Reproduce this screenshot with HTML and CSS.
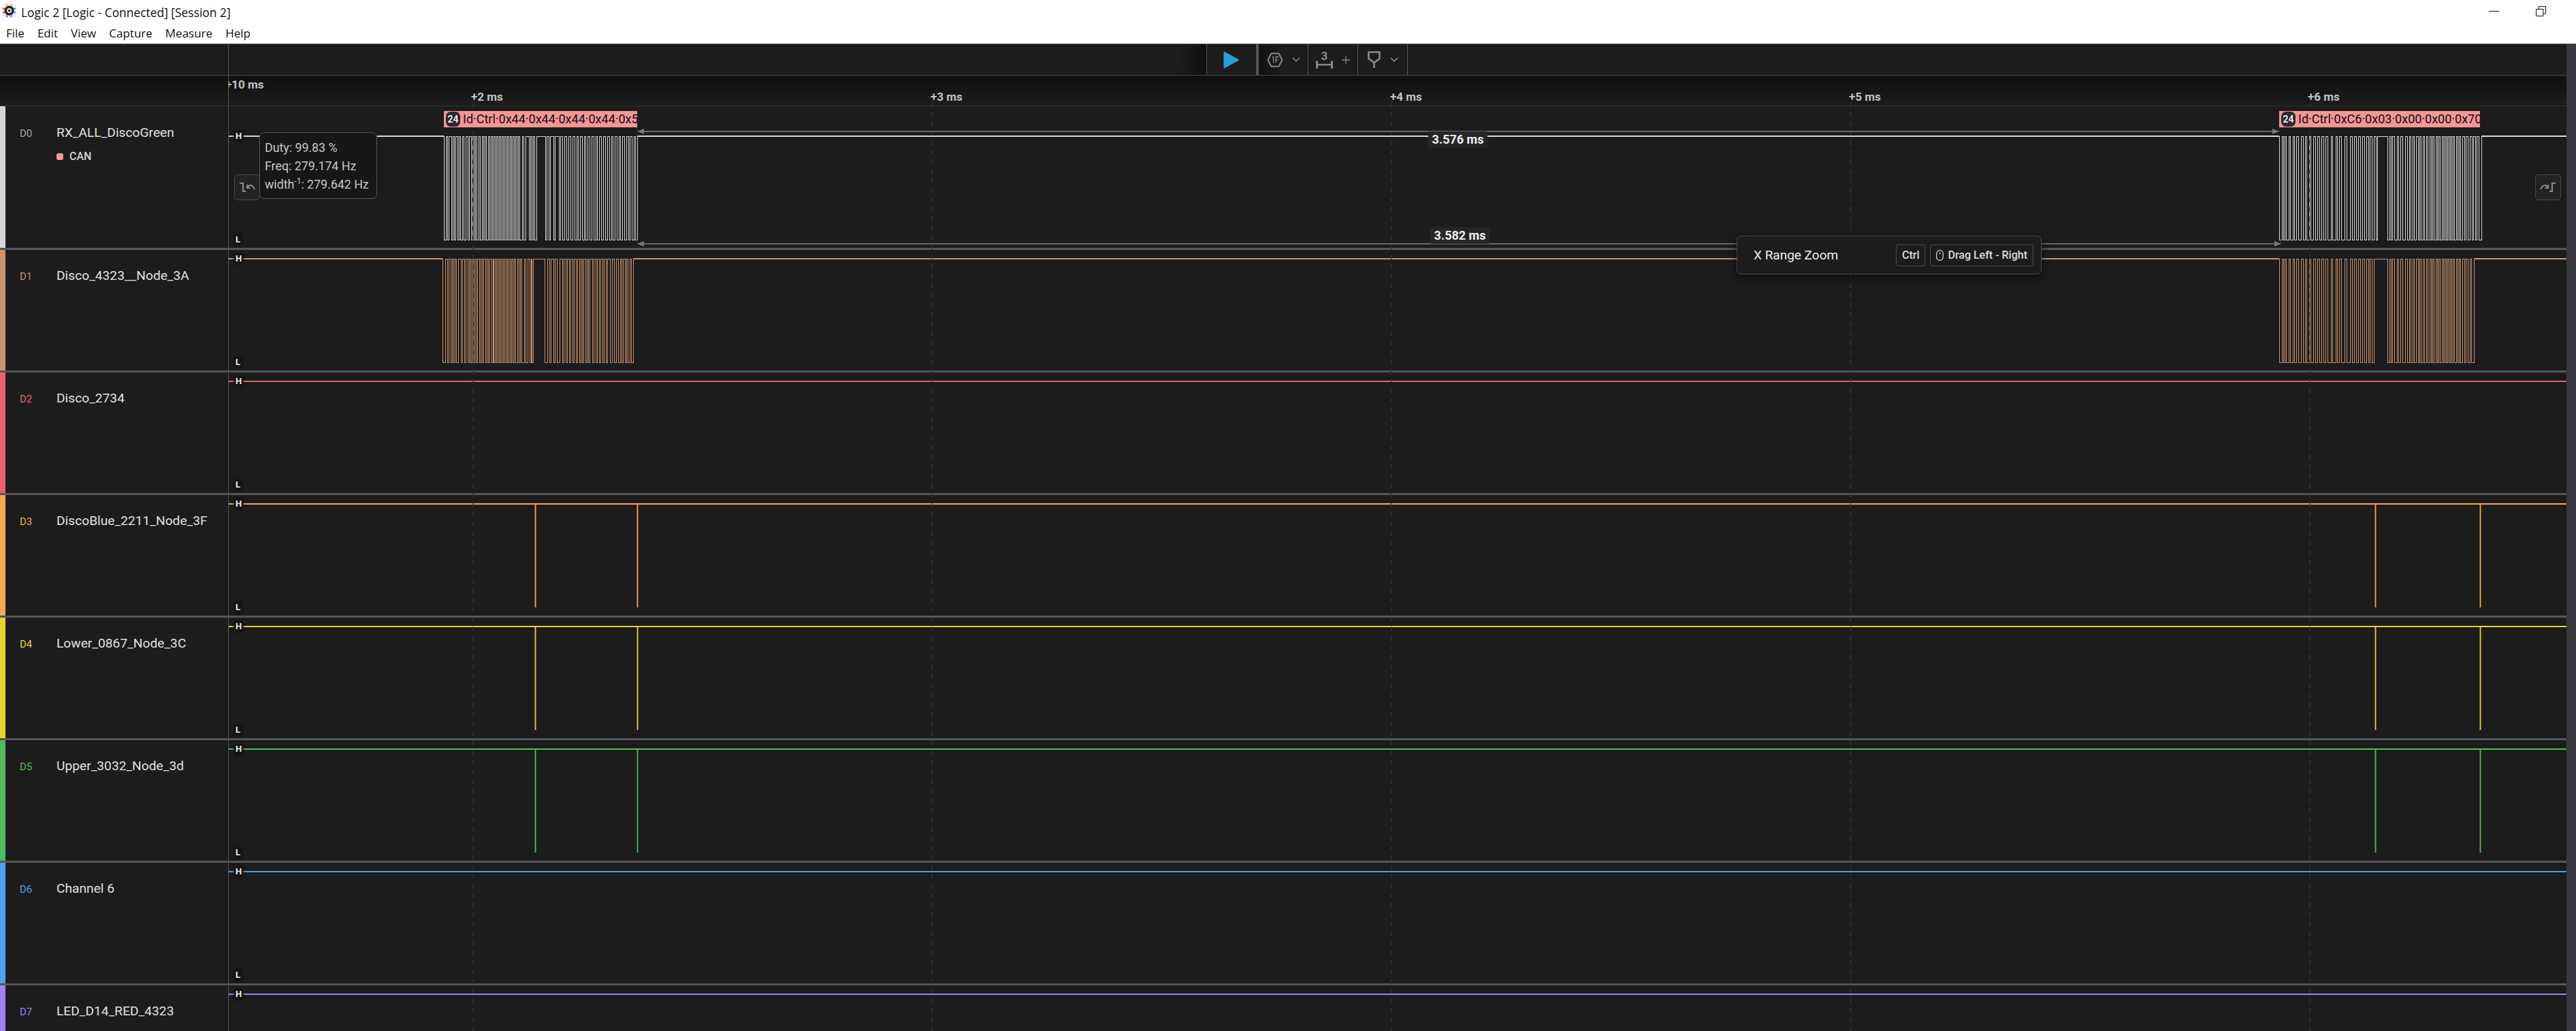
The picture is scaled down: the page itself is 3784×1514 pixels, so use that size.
FILE: index.html
```html
<!DOCTYPE html>
<html>
<head>
  <title>Logic 2 [Logic - Connected] [Session 2]</title>
  <link rel="stylesheet" href="styles.css">
</head>
<body>

<!-- Window title + menu -->
<div class="titlebar">
  <svg class="logo" viewBox="0 0 26 26">
    <rect x="0" y="0" width="24" height="24" rx="6" fill="#f1f1f3"/>
    <rect x="7" y="1" width="2.5" height="5" fill="#f2b632"/>
    <rect x="14" y="1" width="2.5" height="5" fill="#f2b632"/>
    <rect x="1" y="7.5" width="5" height="2.5" fill="#ee4a52"/>
    <rect x="1" y="13.5" width="5" height="2.5" fill="#ee4a52"/>
    <rect x="18" y="7.5" width="5" height="2.5" fill="#2cb4ea"/>
    <rect x="18" y="13.5" width="5" height="2.5" fill="#2cb4ea"/>
    <rect x="7" y="18" width="2.5" height="5" fill="#a45be8"/>
    <rect x="14" y="18" width="2.5" height="5" fill="#a45be8"/>
    <circle cx="12" cy="12" r="8" fill="#26262a"/>
    <circle cx="12" cy="12" r="4" fill="#f5f5f5"/>
    <circle cx="12" cy="12" r="2" fill="#26262a"/>
  </svg>
  <div class="title">Logic 2 [Logic - Connected] [Session 2]</div>
  <svg class="win-min" viewBox="0 0 15 1"><rect width="15" height="1" fill="#111"/></svg>
  <svg class="win-restore" viewBox="0 0 15 15"><path d="M0.5 4.5h10.5v10h-10.500z M4 4.500v-4h10.500v10.500h-3.500" fill="none" stroke="#111"/></svg>
  <div class="menu">
    <span>File</span><span>Edit</span><span>View</span><span>Capture</span><span>Measure</span><span>Help</span>
  </div>
</div>

<div class="app">
  <div class="main">

    <!-- Toolbar -->
    <div class="toolbar">
      <div class="tb-side"></div>
      <div class="tb-fill"></div>
      <div class="tb-btn tb-play">
        <svg width="24" height="26" viewBox="0 0 24 26"><path d="M1 1L23 13L1 25Z" fill="#22a1de" stroke="#22a1de" stroke-linejoin="round"/></svg>
      </div>
      <div class="tb-btn tb-hex">
        <svg width="24" height="22" viewBox="0 0 24 22"><path d="M6.500 1.500h11l5 9.500l-5 9.500h-11l-5-9.500z" fill="none" stroke="#8a8a8a" stroke-width="2"/><path d="M7.500 7.500l2-1v9 M13 15.500v-9h4.500 M13 11h3.500" fill="none" stroke="#8a8a8a" stroke-width="1.300"/></svg>
        <svg width="12" height="8" viewBox="0 0 12 8"><path d="M1 1l5 5l5-5" fill="none" stroke="#8a8a8a" stroke-width="1.500"/></svg>
      </div>
      <div class="tb-btn">
        <span class="tb-measure">
          <span class="tb-three">3</span>
          <svg width="25" height="13" viewBox="0 0 25 13"><path d="M1.500 1.500v11 M23.500 1.500v11" stroke="#8a8a8a" stroke-width="3"/><path d="M1 7h23" stroke="#8a8a8a" stroke-width="2.500"/></svg>
        </span>
        <svg width="12" height="12" viewBox="0 0 12 12"><path d="M6 0v12 M0 6h12" stroke="#8a8a8a" stroke-width="1.300"/></svg>
      </div>
      <div class="tb-btn tb-pin">
        <svg width="19" height="25" viewBox="0 0 19 25"><path d="M1.500 1.500h16v9.500l-8 6l-8-6z M9.500 17v8" fill="none" stroke="#8a8a8a" stroke-width="2.600"/></svg>
        <svg width="12" height="8" viewBox="0 0 12 8"><path d="M1 1l5 5l5-5" fill="none" stroke="#8a8a8a" stroke-width="1.500"/></svg>
      </div>
    </div>

    <!-- Time ruler -->
    <div class="ruler">
      <div class="ruler-side"></div>
      <div class="ruler-scale">
        <span class="tick tick-start">+10 ms</span>
        <span class="tick" style="left:356px">+2 ms</span>
        <span class="tick" style="left:1031px">+3 ms</span>
        <span class="tick" style="left:1706px">+4 ms</span>
        <span class="tick" style="left:2380px">+5 ms</span>
        <span class="tick" style="left:3054px">+6 ms</span>
      </div>
    </div>

    <!-- Channels -->
    <div class="row row-first c0">
      <div class="chan">
        <span class="chan-id">D0</span>
        <div>
          <div class="chan-name">RX_ALL_DiscoGreen</div>
          <div class="analyzer"><i></i>CAN</div>
        </div>
      </div>
      <div class="track">
        <div class="ann-band"></div>
        <div class="wave-box">
          <span class="lvl lvl-h">H</span><span class="lvl lvl-l">L</span>
          <svg class="wave wave-burst" viewBox="336 0 3434 177"><path class="idle" d="M336 13H652M936 13H3348M3645 13H3770"/><path d="M652 13V165H655V13H657V165H659V13H663V165H665V13H667V165H669V13H672V165H674V13H676V165H679V13H681V165H684V13H687V165H689V13H692V165H694V13H696V165H698V13H700V165H703V13H705V165H708V13H710V165H712V13H714V165H717V13H719V165H721V13H723V165H725V13H727V165H729V13H731V165H733V13H735V165H737V13H739V165H741V13H743V165H745V13H747V165H749V13H751V165H753V13H755V165H757V13H759V165H761V13H763V165H767V13H769V165H772V13H777V165H779V13H781V165H783V13H785V165H788V13H801V165H803V13H806V165H808V13H813V165H815V13H821V165H823V13H826V165H829V13H832V165H835V13H838V165H841V13H844V165H847V13H849V165H852V13H855V165H858V13H860V165H863V13H866V165H869V13H872V165H875V13H877V165H880V13H883V165H886V13H889V165H892V13H895V165H898V13H900V165H903V13H906V165H909V13H911V165H914V13H917V165H920V13H923V165H925V13H928V165H931V13H933V165H936V13M3348 13V165H3352V13H3354V165H3356V13H3358V165H3362V13H3364V165H3368V13H3370V165H3373V13H3376V165H3380V13H3383V165H3386V13H3388V165H3392V13H3394V165H3398V13H3401V165H3404V13H3407V165H3410V13H3413V165H3416V13H3419V165H3424V13H3426V165H3431V13H3433V165H3436V13H3439V165H3444V13H3447V165H3452V13H3455V165H3458V13H3461V165H3464V13H3467V165H3470V13H3473V165H3476V13H3479V165H3481V13H3484V165H3487V13H3490V165H3492V13H3507V165H3510V13H3512V165H3514V13H3517V165H3521V13H3523V165H3526V13H3529V165H3533V13H3536V165H3539V13H3541V165H3544V13H3546V165H3549V13H3552V165H3554V13H3556V165H3559V13H3561V165H3564V13H3566V165H3569V13H3571V165H3573V13H3575V165H3578V13H3580V165H3582V13H3584V165H3587V13H3589V165H3591V13H3593V165H3595V13H3597V165H3599V13H3601V165H3603V13H3605V165H3608V13H3610V165H3612V13H3614V165H3617V13H3620V165H3622V13H3625V165H3628V13H3631V165H3633V13H3636V165H3638V13H3641V165H3645V13"/></svg>
        </div>
      </div>
    </div>

    <div class="row c1">
      <div class="chan"><span class="chan-id">D1</span><div class="chan-name">Disco_4323__Node_3A</div></div>
      <div class="track wave-box">
        <span class="lvl lvl-h">H</span><span class="lvl lvl-l">L</span>
        <svg class="wave wave-burst" viewBox="336 0 3434 177"><path class="idle" d="M336 13H650M930 13H3348M3634 13H3770"/><path d="M650 13V165H654V13H657V165H659V13H662V165H664V13H666V165H668V13H670V165H673V13H677V165H679V13H682V165H684V13H687V165H689V13H691V165H693V13H695V165H697V13H699V165H701V13H704V165H706V13H708V165H710V13H713V165H715V13H717V165H719V13H722V165H724V13H725V165H727V13H729V165H731V13H733V165H735V13H737V165H739V13H741V165H743V13H745V165H747V13H749V165H751V13H753V165H755V13H757V165H760V13H762V165H764V13H766V165H770V13H772V165H775V13H778V165H780V13H781V165H783V13H800V165H804V13H807V165H809V13H813V165H815V13H818V165H822V13H826V165H828V13H831V165H833V13H836V165H838V13H841V165H843V13H846V165H848V13H851V165H853V13H855V165H857V13H860V165H862V13H864V165H866V13H870V165H872V13H875V165H877V13H880V165H882V13H885V165H887V13H890V165H892V13H896V165H899V13H902V165H905V13H908V165H911V13H913V165H915V13H918V165H920V13H922V165H925V13H927V165H930V13M3348 13V165H3352V13H3354V165H3356V13H3358V165H3362V13H3364V165H3368V13H3370V165H3373V13H3376V165H3380V13H3383V165H3386V13H3388V165H3392V13H3394V165H3398V13H3401V165H3404V13H3407V165H3410V13H3413V165H3416V13H3419V165H3424V13H3426V165H3431V13H3433V165H3436V13H3439V165H3444V13H3447V165H3452V13H3455V165H3458V13H3461V165H3464V13H3467V165H3470V13H3473V165H3476V13H3479V165H3481V13H3484V165H3487V13H3507V165H3510V13H3512V165H3514V13H3517V165H3521V13H3523V165H3526V13H3529V165H3533V13H3536V165H3539V13H3541V165H3544V13H3546V165H3549V13H3552V165H3554V13H3556V165H3559V13H3561V165H3564V13H3566V165H3569V13H3571V165H3573V13H3575V165H3578V13H3580V165H3582V13H3584V165H3587V13H3589V165H3591V13H3593V165H3595V13H3597V165H3599V13H3601V165H3603V13H3605V165H3608V13H3610V165H3612V13H3614V165H3617V13H3620V165H3622V13H3625V165H3628V13H3630V165H3634V13"/></svg>
      </div>
    </div>

    <div class="row c2">
      <div class="chan"><span class="chan-id">D2</span><div class="chan-name">Disco_2734</div></div>
      <div class="track wave-box">
        <span class="lvl lvl-h">H</span><span class="lvl lvl-l">L</span>
        <svg class="wave" viewBox="336 0 3434 177"><path d="M336 13H3770"/></svg>
      </div>
    </div>

    <div class="row c3">
      <div class="chan"><span class="chan-id">D3</span><div class="chan-name">DiscoBlue_2211_Node_3F</div></div>
      <div class="track wave-box">
        <span class="lvl lvl-h">H</span><span class="lvl lvl-l">L</span>
        <svg class="wave" viewBox="336 0 3434 177"><path d="M336 13H3770M786.500 13V165M936.500 13V165M3489.500 13V165M3643.500 13V165"/></svg>
      </div>
    </div>

    <div class="row c4">
      <div class="chan"><span class="chan-id">D4</span><div class="chan-name">Lower_0867_Node_3C</div></div>
      <div class="track wave-box">
        <span class="lvl lvl-h">H</span><span class="lvl lvl-l">L</span>
        <svg class="wave" viewBox="336 0 3434 177"><path d="M336 13H3770M786.500 13V165M936.500 13V165M3489.500 13V165M3643.500 13V165"/></svg>
      </div>
    </div>

    <div class="row c5">
      <div class="chan"><span class="chan-id">D5</span><div class="chan-name">Upper_3032_Node_3d</div></div>
      <div class="track wave-box">
        <span class="lvl lvl-h">H</span><span class="lvl lvl-l">L</span>
        <svg class="wave" viewBox="336 0 3434 177"><path d="M336 13H3770M786.500 13V165M936.500 13V165M3489.500 13V165M3643.500 13V165"/></svg>
      </div>
    </div>

    <div class="row c6">
      <div class="chan"><span class="chan-id">D6</span><div class="chan-name">Channel 6</div></div>
      <div class="track wave-box">
        <span class="lvl lvl-h">H</span><span class="lvl lvl-l">L</span>
        <svg class="wave" viewBox="336 0 3434 177"><path d="M336 13H3770"/></svg>
      </div>
    </div>

    <div class="row row-last c7">
      <div class="chan"><span class="chan-id">D7</span><div class="chan-name">LED_D14_RED_4323</div></div>
      <div class="track wave-box">
        <span class="lvl lvl-h">H</span>
        <svg class="wave" viewBox="336 0 3434 177"><path d="M336 13H3770"/></svg>
      </div>
    </div>

    <!-- Grid lines and timing marker arrows, over the tracks -->
    <svg class="overlay" viewBox="0 64 3770 1450">
      <path class="grid" d="M695 150V1514M1369.500 150V1514M2044 150V1514M2718.500 150V1514M3393 150V1514"/>
      <path class="grid" d="M936 187V200M3348 187V200M936 352V364M3351 352V364"/>
      <path class="mark" d="M940 193H3344M940 358H3347"/>
      <path class="mark-head" d="M936 193l10-4v8zM3348 193l-10-4v8zM936 358l10-4v8zM3351 358l-10-4v8z"/>
    </svg>

    <!-- Protocol frames -->
    <div class="ann ann-a"><span class="ann-badge">24</span>Id·Ctrl·0x44·0x44·0x44·0x44·0x5</div>
    <div class="ann ann-b"><span class="ann-badge">24</span>Id·Ctrl·0xC6·0x03·0x00·0x00·0x70</div>

    <div class="span-label span-top">3.576 ms</div>
    <div class="span-label span-bottom">3.582 ms</div>

    <div class="step-btn step-left">
      <svg width="24" height="20" viewBox="0 0 24 20"><path d="M1 4H6V16H10" fill="none" stroke="#8a8a8a" stroke-width="2.200"/><path d="M23 13C20 6 16 6 13 9" fill="none" stroke="#8a8a8a" stroke-width="2"/><path d="M11 5V12H17Z" fill="#8a8a8a"/></svg>
    </div>
    <div class="step-btn step-right">
      <svg width="24" height="20" viewBox="0 0 24 20"><path d="M23 4H18V16H14" fill="none" stroke="#8a8a8a" stroke-width="2.200"/><path d="M1 13C4 6 8 6 11 9" fill="none" stroke="#8a8a8a" stroke-width="2"/><path d="M13 5V12H7Z" fill="#8a8a8a"/></svg>
    </div>

    <div class="tip">
      <div>Duty: 99.83 %</div>
      <div>Freq: 279.174 Hz</div>
      <div>width<sup>-1</sup>: 279.642 Hz</div>
    </div>

    <div class="hint">
      <span class="hint-title">X Range Zoom</span>
      <span class="key">Ctrl</span>
      <span class="key key-drag">
        <svg width="11" height="16" viewBox="0 0 11 16"><rect x="0.700" y="0.700" width="9.600" height="14.600" rx="4.800" fill="none" stroke="#ddd" stroke-width="1.200"/><path d="M5.500 3.500v3" stroke="#ddd" stroke-width="1.200"/></svg>
        Drag Left - Right
      </span>
    </div>
  </div>
  <div class="scrollbar"></div>
</div>

</body>
</html>
```

FILE: styles.css
```css
* {
  box-sizing: border-box;
}
html, body {
  margin: 0;
  height: 100%;
  overflow: hidden;
}
body {
  font-family: 'Roboto', 'Liberation Sans', sans-serif;
  background: #1c1c1c;
  display: flex;
  flex-direction: column;
}

/* title bar */
.titlebar {
  position: relative;
  height: 64px;
  flex: none;
  background: #fff;
  font-family: 'Open Sans', 'Liberation Sans', sans-serif;
  color: #111;
}
.logo {
  position: absolute;
  left: 3px;
  top: 5px;
  width: 23px;
  height: 23px;
}
.title {
  position: absolute;
  left: 31px;
  top: 6px;
  font-size: 17.400px;
  line-height: 24px;
}
.win-min {
  position: absolute;
  left: 3656px;
  top: 16px;
  width: 15px;
  height: 1px;
}
.win-restore {
  position: absolute;
  left: 3725px;
  top: 9px;
  width: 15px;
  height: 15px;
}
.menu {
  position: absolute;
  left: 9px;
  top: 37px;
  display: flex;
  gap: 19px;
  font-size: 17px;
  line-height: 24px;
}

/* layout */
.app {
  flex: 1;
  display: flex;
  min-height: 0;
}
.main {
  position: relative;
  flex: 0 0 3770px;
  overflow: hidden;
}
.scrollbar {
  flex: 1;
  background: #38383e;
  border-top: 1px solid #555;
}

/* toolbar */
.toolbar {
  display: flex;
  height: 47px;
  background: #1c1c1c;
  border-top: 1px solid #555;
  border-bottom: 1px solid #4a4a4a;
}
.tb-side {
  flex: 0 0 336px;
  border-right: 1px solid #555;
}
.tb-fill {
  flex: 0 0 1437px;
  border-right: 1px solid #555;
  background: linear-gradient(90deg, #1c1c1c calc(100% - 40px), #101010);
}
.tb-btn {
  flex: 0 0 73px;
  display: flex;
  align-items: center;
  justify-content: center;
  gap: 13px;
  border-right: 1px solid #555;
}
.tb-play {
  flex-basis: 76px;
  border-right: 4px solid #55555a;
}
.tb-hex {
  background: linear-gradient(90deg, #101010, #1c1c1c 32px);
}
.tb-pin {
  gap: 14px;
}
.tb-measure {
  display: flex;
  flex-direction: column;
  align-items: center;
}
.tb-three {
  color: #8a8a8a;
  font-size: 17px;
  font-weight: 700;
  line-height: 14px;
  margin-bottom: -1px;
}

/* ruler */
.ruler {
  display: flex;
  height: 45px;
  background: linear-gradient(#0f0f0f, #1c1c1c);
  border-bottom: 1px solid #333;
}
.ruler-side {
  flex: 0 0 335px;
}
.ruler-scale {
  position: relative;
  flex: 1;
  border-left: 1px solid #555;
  overflow: hidden;
}
.tick {
  position: absolute;
  top: 22px;
  font-size: 17px;
  font-weight: 700;
  line-height: 18px;
  color: #c4c4c4;
  white-space: nowrap;
}
.tick-start {
  left: -5px;
  top: 4px;
}

/* channel rows */
.row {
  display: flex;
  height: 180px;
  border-bottom: 3px solid #55555a;
}
.row-first {
  height: 211px;
}
.row-last {
  height: 67px;
  border-bottom: none;
}
.c0 { --ch: #d6d6d6; --id: #a8a8a8; }
.c1 { --ch: #c9946f; }
.c2 { --ch: #ee5f74; }
.c3 { --ch: #f5a94e; }
.c4 { --ch: #e8d42a; }
.c5 { --ch: #4fbd5b; }
.c6 { --ch: #4aa2f2; }
.c7 { --ch: #a280f0; }
.chan {
  flex: 0 0 335px;
  display: flex;
  align-items: flex-start;
  padding: 26px 0 0 21px;
  border-left: 8px solid var(--ch);
  background: #1c1c1c;
}
.row-first .chan {
  padding-top: 27px;
}
.chan-id {
  flex: 0 0 54px;
  font-size: 15px;
  line-height: 26px;
  color: var(--id, var(--ch));
}
.chan-name {
  font-size: 19.200px;
  line-height: 24px;
  color: #e2e2e2;
  white-space: nowrap;
}
.analyzer {
  display: flex;
  align-items: center;
  gap: 9px;
  margin-top: 11px;
  font-size: 16px;
  font-weight: 500;
  line-height: 24px;
  color: #d4d4d4;
}
.analyzer i {
  width: 10px;
  height: 10px;
  border-radius: 3px;
  background: #f59595;
}
.track {
  flex: 1;
  min-width: 0;
  border-left: 1px solid #555;
}
.ann-band {
  height: 31px;
}
.wave-box {
  position: relative;
}
.wave {
  display: block;
  width: 3434px;
  height: 177px;
  fill: none;
  stroke: var(--ch);
  stroke-width: 1.800;
}
.wave-burst {
  stroke-width: 1;
  shape-rendering: crispEdges;
}
.wave-burst .idle {
  stroke-width: 2;
}
.lvl {
  position: absolute;
  left: 8px;
  z-index: 1;
  padding: 0 2px;
  font-size: 13px;
  font-weight: 700;
  line-height: 16px;
  color: #eee;
  background: #141414;
  box-shadow: 0 0 4px #141414;
}
.lvl-h {
  top: 5px;
}
.lvl-l {
  top: 157px;
}

/* overlays */
.overlay {
  position: absolute;
  left: 0;
  top: 0;
  width: 3770px;
  height: 1450px;
  pointer-events: none;
}
.grid {
  fill: none;
  stroke: #343436;
  stroke-width: 1.300;
  stroke-dasharray: 7 7;
}
.mark {
  fill: none;
  stroke: #666;
  stroke-width: 2.200;
}
.mark-head {
  fill: #7a7a7a;
}
.ann {
  position: absolute;
  top: 99px;
  height: 24px;
  display: flex;
  align-items: center;
  overflow: hidden;
  background: #f59595;
  color: #0d0d16;
  font-size: 18px;
  line-height: 24px;
  white-space: nowrap;
}
.ann-a {
  left: 652px;
  width: 284px;
}
.ann-b {
  left: 3348px;
  width: 295px;
}
.ann-badge {
  flex: none;
  width: 21px;
  height: 22px;
  margin: 0 4px 0 3px;
  border-radius: 7px;
  background: #2a2a2e;
  color: #fff;
  font-size: 14px;
  font-weight: 500;
  line-height: 22px;
  text-align: center;
}
.span-label {
  position: absolute;
  width: 87px;
  height: 24px;
  background: #262628;
  color: #f0f0f0;
  font-size: 18px;
  font-weight: 700;
  line-height: 24px;
  text-align: center;
  white-space: nowrap;
}
.span-top {
  left: 2098px;
  top: 129px;
}
.span-bottom {
  left: 2101px;
  top: 270px;
}
.step-btn {
  position: absolute;
  top: 192px;
  width: 38px;
  height: 38px;
  display: flex;
  align-items: center;
  justify-content: center;
  background: #232325;
  border: 1px solid #48484c;
  border-radius: 5px;
}
.step-left {
  left: 344px;
}
.step-right {
  left: 3724px;
}
.tip {
  position: absolute;
  left: 381px;
  top: 130px;
  width: 173px;
  height: 98px;
  padding: 8px 0 0 7px;
  background: #171717;
  border: 1px solid #55555a;
  border-radius: 7px;
  color: #c8c8c8;
  font-size: 17.800px;
  line-height: 27px;
  white-space: nowrap;
}
.tip sup {
  font-size: 12px;
  line-height: 0;
}
.hint {
  position: absolute;
  left: 2551px;
  top: 282px;
  width: 448px;
  height: 57px;
  display: flex;
  align-items: center;
  padding: 0 11px 0 24px;
  background: #1c1c1c;
  border: 1px solid #4a4a4e;
  border-radius: 7px;
  box-shadow: 0 4px 14px rgba(0,0,0,0.6);
}
.hint-title {
  flex: 1;
  color: #eee;
  font-size: 19px;
}
.key {
  display: flex;
  align-items: center;
  gap: 6px;
  height: 32px;
  padding: 0 8px;
  border: 1px solid #4a4a4e;
  border-radius: 3px;
  color: #ddd;
  font-size: 16px;
  font-weight: 500;
  white-space: nowrap;
}
.key-drag {
  margin-left: 7px;
}
```
